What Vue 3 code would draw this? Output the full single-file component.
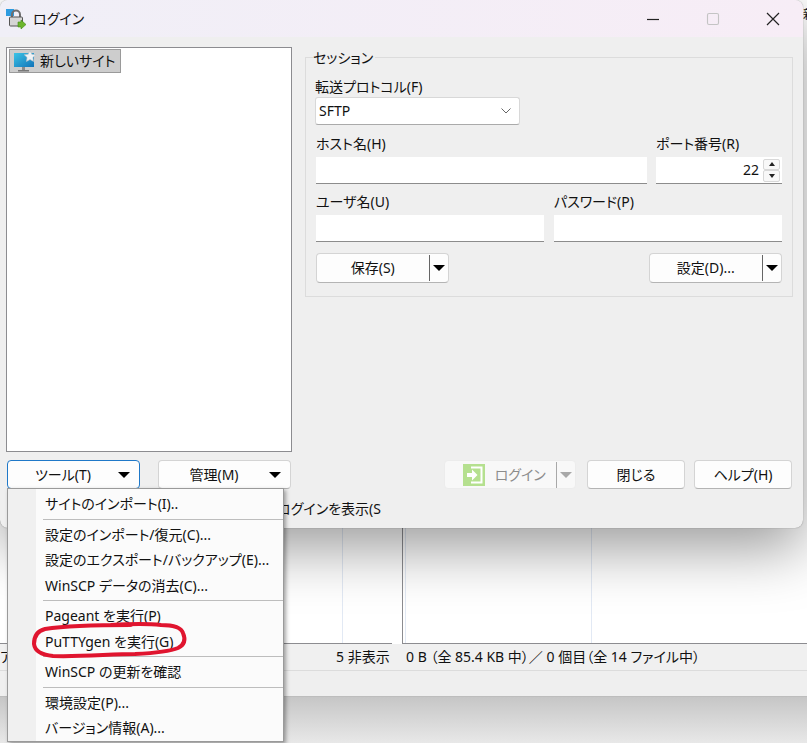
<template>
  <div class="stage">
    <!-- 後ろのメインウィンドウ -->
    <div class="back">
      <div class="panels">
        <div class="panel left-panel"><i class="col col-left"></i></div>
        <div class="panel right-panel">
          <i class="col" v-for="w in [186, 88]" :key="w" :style="{ width: w + 'px' }"></i>
        </div>
      </div>
      <div class="statusbar">
        <span class="st-a">ア</span>
        <span class="st-hidden">5 非表示</span>
        <span class="st-info">0 B （全 85.4 KB 中）／ 0 個目（全 14 ファイル中）</span>
      </div>
      <div class="strip"></div>
      <div class="desk"></div>
    </div>
    <div class="edge-text">新</div>

    <!-- ログインダイアログ -->
    <div class="dialog">
      <div class="titlebar">
        <svg class="app-icon" width="22" height="22" viewBox="0 0 22 22">
          <path d="M1 1h8v7H1z" fill="#2d9be0" />
          <path d="M7 10V6.500a4 4 0 0 1 8 0V10" fill="none" stroke="#6e6e6e" stroke-width="2" />
          <rect x="4.500" y="9" width="13" height="9" rx="1" fill="#d5d5d5" stroke="#555" />
          <path d="M13 14h3v-2l5 4.500-5 4.500v-2h-3z" fill="#6cb52d" stroke="#3f8a14" stroke-width=".6" />
        </svg>
        <span class="title-text">ログイン</span>
        <div class="win-buttons">
          <svg width="14" height="14" viewBox="0 0 14 14"><path d="M1 7.500h12" stroke="#222" stroke-width="1.200" /></svg>
          <svg width="14" height="14" viewBox="0 0 14 14"><rect x="1.500" y="1.500" width="11" height="11" rx="1.500" fill="none" stroke="#c4c4c4" stroke-width="1.100" /></svg>
          <svg width="14" height="14" viewBox="0 0 14 14"><path d="M1 1l12 12M13 1L1 13" stroke="#222" stroke-width="1.200" /></svg>
        </div>
      </div>

      <div class="body">
        <div class="main">
          <div class="tree">
            <div class="tree-item">
              <svg width="24" height="22" viewBox="0 0 24 22">
                <defs>
                  <linearGradient id="scr" x1="0" y1="0" x2="1" y2="1">
                    <stop offset="0" stop-color="#3cc4e6" />
                    <stop offset="1" stop-color="#1273b8" />
                  </linearGradient>
                </defs>
                <rect x="1" y="3" width="20" height="14" fill="url(#scr)" />
                <rect x="9" y="17" width="3" height="3" fill="#8a8a8a" />
                <rect x="5" y="20" width="11" height="1.500" fill="#777" />
                <path d="M17 .5l1.800 3.700 4 .5-2.900 2.800.7 4-3.600-2-3.600 2 .7-4-2.900-2.800 4-.5z" fill="#eef2f5" stroke="#b5bcc2" stroke-width=".6" />
              </svg>
              <span>新しいサイト</span>
            </div>
          </div>

          <div class="session">
            <span class="legend">セッション</span>
            <div class="field-label first">転送プロトコル(F)</div>
            <div class="select">
              <span>SFTP</span>
              <svg width="10" height="6" viewBox="0 0 10 6"><path d="M.5.500L5 5 9.500.500" fill="none" stroke="#666" /></svg>
            </div>

            <div class="row row-host">
              <div class="col-host">
                <div class="field-label">ホスト名(H)</div>
                <div class="input"></div>
              </div>
              <div class="col-port">
                <div class="field-label">ポート番号(R)</div>
                <div class="input port">
                  <span>22</span>
                  <div class="spin">
                    <button class="spin-btn"><i class="tri-up"></i></button>
                    <button class="spin-btn"><i class="tri-down small"></i></button>
                  </div>
                </div>
              </div>
            </div>

            <div class="row row-user">
              <div class="col-half">
                <div class="field-label">ユーザ名(U)</div>
                <div class="input"></div>
              </div>
              <div class="col-half">
                <div class="field-label">パスワード(P)</div>
                <div class="input"></div>
              </div>
            </div>

            <div class="row row-actions">
              <button class="btn split">
                <span class="btn-label">保存(S)</span>
                <i class="bar"></i>
                <i class="tri-down"></i>
              </button>
              <button class="btn split">
                <span class="btn-label">設定(D)...</span>
                <i class="bar"></i>
                <i class="tri-down"></i>
              </button>
            </div>
          </div>
        </div>

        <div class="footer">
          <button class="btn drop focused">
            <span class="btn-label">ツール(T)</span>
            <i class="tri-down"></i>
          </button>
          <button class="btn drop">
            <span class="btn-label">管理(M)</span>
            <i class="tri-down"></i>
          </button>
          <button class="btn login">
            <svg width="22" height="22" viewBox="0 0 22 22">
              <rect width="22" height="22" fill="#b5e08f" />
              <path d="M8 3.500h10.500v15H8" fill="none" stroke="#fff" stroke-width="2" />
              <path d="M4 9h5V5.500l5.500 5.500L9 16.500V13H4z" fill="#fff" />
            </svg>
            <span class="btn-label">ログイン</span>
            <i class="bar gray"></i>
            <i class="tri-down gray"></i>
          </button>
          <button class="btn plain">閉じる</button>
          <button class="btn plain">ヘルプ(H)</button>
        </div>
        <div class="show-login">ログインを表示(S</div>
      </div>
    </div>

    <!-- ツールメニュー -->
    <div class="menu">
      <template v-for="(group, g) in menu" :key="g">
        <div v-if="g > 0" class="sep"></div>
        <div class="menu-item" v-for="item in group" :key="item">{{ item }}</div>
      </template>
    </div>

    <!-- 手書きの赤い丸 -->
    <svg class="scribble" width="160" height="42" viewBox="0 0 160 42">
      <path
        d="M100 5C80 5 40 5 14 9C6 11 3 17 3 24C4 32 12 35 22 36C50 37 80 34 104 34C125 33 140 31 147 28C153 25 155 20 152 13C150 7 142 5 130 5C112 3 96 4 80 5"
        fill="none" stroke="#e0152f" stroke-width="4" stroke-linecap="round" />
    </svg>
  </div>
</template>

<script setup>
const menu = [
  ['サイトのインポート(I)..'],
  ['設定のインポート/復元(C)...', '設定のエクスポート/バックアップ(E)...', 'WinSCP データの消去(C)...'],
  ['Pageant を実行(P)', 'PuTTYgen を実行(G)'],
  ['WinSCP の更新を確認'],
  ['環境設定(P)...', 'バージョン情報(A)...'],
];
</script>

<style scoped>
.stage,
.stage * {
  box-sizing: border-box;
}

.stage {
  position: relative;
  width: 807px;
  height: 743px;
  overflow: hidden;
  background: #fff;
  font-family: "Noto Sans", "Noto Sans CJK JP", sans-serif;
  font-size: 14px;
  line-height: 18px;
  font-feature-settings: "palt";
  color: #111;
}

.back {
  display: flex;
  flex-direction: column;
  height: 743px;
}

.panels {
  display: flex;
  height: 644px;
  gap: 10px;
  flex: none;
}

.panel {
  border-bottom: 1px solid #8c8c90;
  background: #fff;
}

.left-panel {
  width: 392px;
  padding-left: 342px;
}

.right-panel {
  flex: 1;
  display: flex;
  border-left: 1px solid #8c8c90;
  padding-left: 2px;
}

.col {
  display: block;
  border-left: 1px solid #e2e9f4;
}

.col-left {
  height: 100%;
}

.statusbar {
  height: 27px;
  flex: none;
  display: flex;
  align-items: center;
  background: #f0f0f0;
  border-bottom: 1px solid #dcdcdc;
}

.st-a {
  width: 336px;
}

.st-hidden {
  width: 70px;
}

.strip {
  height: 26px;
  flex: none;
  background: #efefef;
  border-bottom: 1px solid #bdbdbd;
}

.desk {
  flex: 1;
  background: linear-gradient(#c6c6c6, #e8e8e8);
}

.edge-text {
  position: absolute;
  left: 803px;
  top: 6px;
  font-size: 12px;
}

.dialog {
  position: absolute;
  left: 0;
  top: 0;
  width: 803px;
  height: 528px;
  display: flex;
  flex-direction: column;
  background: #efefef;
  border-radius: 8px;
  box-shadow: 0 20px 60px rgba(0, 0, 0, 0.4), 0 0 1px rgba(0, 0, 0, 0.5);
}

.titlebar {
  height: 37px;
  flex: none;
  display: flex;
  align-items: center;
  padding-left: 5px;
  background: linear-gradient(90deg, #f0eff7, #f7edf6);
  border-radius: 8px 8px 0 0;
}

.app-icon {
  margin-right: 6px;
}

.win-buttons {
  margin-left: auto;
  margin-right: 23px;
  display: flex;
  gap: 46px;
}

.body {
  flex: 1;
  display: flex;
  flex-direction: column;
  padding: 10px 10px 0 6px;
}

.main {
  display: flex;
  gap: 13px;
}

.tree {
  width: 286px;
  height: 405px;
  padding: 1px 2px;
  background: #fff;
  border: 1px solid #8c8c90;
}

.tree-item {
  display: flex;
  align-items: center;
  gap: 3px;
  width: 112px;
  height: 24px;
  padding-left: 3px;
  background: #cdcdcd;
  border: 1px solid #9a9a9a;
  white-space: nowrap;
}

.session {
  position: relative;
  width: 488px;
  height: 240px;
  margin-top: 10px;
  padding: 0 10px;
  border: 1px solid #dcdcdc;
}

.legend {
  position: absolute;
  left: 7px;
  top: -9px;
  padding-right: 2px;
  background: #efefef;
}

.field-label {
  height: 18px;
  margin-bottom: 4px;
  white-space: nowrap;
}

.field-label.first {
  margin: 20px 0 1px -1px;
}

.select {
  display: flex;
  align-items: center;
  justify-content: space-between;
  width: 205px;
  height: 28px;
  margin-left: -1px;
  padding: 0 8px 0 3px;
  background: #fff;
  border: 1px solid #d8d8d8;
  border-bottom-color: #aaa;
  border-radius: 3px;
}

.row {
  display: flex;
}

.row-host {
  margin-top: 10px;
  gap: 9px;
}

.col-host {
  width: 331px;
}

.col-port {
  width: 126px;
}

.row-user {
  margin-top: 9px;
  gap: 10px;
}

.col-half {
  width: 228px;
}

.input {
  height: 27px;
  background: #fff;
  border-bottom: 1px solid #8c8c8c;
}

.port {
  display: flex;
  align-items: center;
  justify-content: flex-end;
  gap: 4px;
  padding-right: 2px;
}

.spin {
  display: flex;
  flex-direction: column;
}

.spin-btn {
  display: flex;
  align-items: center;
  justify-content: center;
  width: 17px;
  height: 11.500px;
  padding: 0;
  background: #f8f8f8;
  border: 1px solid #d8d8d8;
  border-radius: 2px;
}

.row-actions {
  margin-top: 11px;
  justify-content: space-between;
}

.btn {
  display: flex;
  align-items: center;
  height: 30px;
  padding: 0;
  background: #fdfdfd;
  border: 1px solid #d4d4d4;
  border-bottom-color: #b4b4b4;
  border-radius: 4px;
  font: inherit;
  font-feature-settings: "palt";
  color: #111;
  white-space: nowrap;
}

.split {
  width: 133px;
}

.btn-label {
  flex: 1;
  text-align: center;
}

.bar {
  display: block;
  width: 1.500px;
  height: 26px;
  margin-right: 3px;
  background: #666;
}

.bar.gray {
  background: #a8a8a8;
}

.tri-down {
  display: block;
  width: 0;
  height: 0;
  margin-right: 3px;
  border-left: 6px solid transparent;
  border-right: 6px solid transparent;
  border-top: 6px solid #000;
}

.tri-down.gray {
  border-top-color: #a8a8a8;
}

.tri-down.small {
  margin: 0;
  border-width: 4px 3.500px 0;
  border-top-color: #222;
}

.tri-up {
  display: block;
  width: 0;
  height: 0;
  border-left: 3.500px solid transparent;
  border-right: 3.500px solid transparent;
  border-bottom: 4px solid #222;
}

.footer {
  display: flex;
  gap: 9px;
  margin-top: 8px;
  margin-left: 1px;
  padding-right: 1px;
}

.footer .btn {
  height: 29px;
}

.drop {
  width: 133px;
  margin-right: 9px;
  padding-right: 6px;
}

.focused {
  border-color: #1f78c8;
}

.login {
  width: 132px;
  margin-left: auto;
  margin-right: 2px;
  padding-left: 18px;
  background: #f8f8f8;
  border-color: #ececec;
  color: #8c8c8c;
}

.plain {
  width: 98px;
  justify-content: center;
}

.show-login {
  margin-top: 11px;
  margin-left: 271px;
  white-space: nowrap;
}

.menu {
  position: absolute;
  left: 7px;
  top: 488px;
  width: 277px;
  height: 254px;
  padding: 2px 0 0;
  background: linear-gradient(90deg, #f0f0f0 28px, #fbfbfb 28px);
  border: 1px solid #9a9a9a;
  box-shadow: 2px 2px 4px rgba(0, 0, 0, 0.35);
}

.menu-item {
  height: 25.500px;
  padding-left: 37px;
  line-height: 25px;
  white-space: nowrap;
}

.sep {
  height: 1px;
  margin: 2px 0 2px 35px;
  background: #bdbdbd;
}

.scribble {
  position: absolute;
  left: 31px;
  top: 620px;
}
</style>
